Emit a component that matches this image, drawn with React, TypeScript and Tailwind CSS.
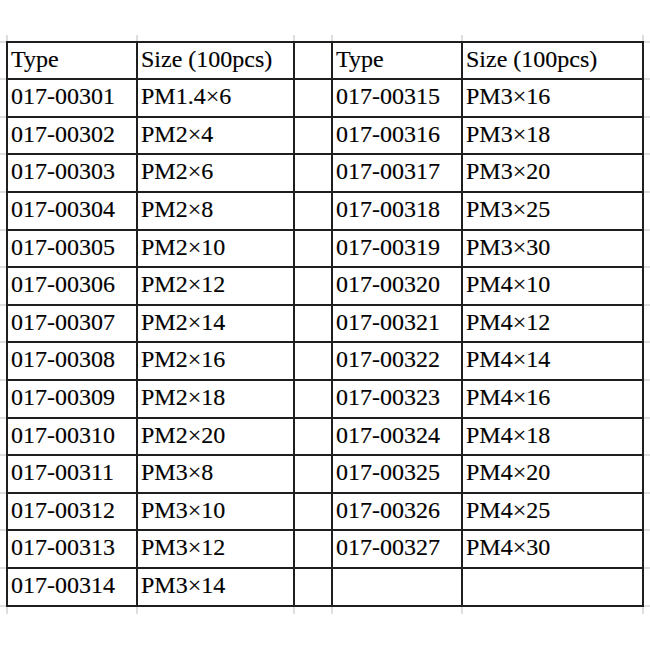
import React from 'react';

type Row = [string, string, string, string];

const rows: Row[] = [
  ['017-00301', 'PM1.4×6', '017-00315', 'PM3×16'],
  ['017-00302', 'PM2×4', '017-00316', 'PM3×18'],
  ['017-00303', 'PM2×6', '017-00317', 'PM3×20'],
  ['017-00304', 'PM2×8', '017-00318', 'PM3×25'],
  ['017-00305', 'PM2×10', '017-00319', 'PM3×30'],
  ['017-00306', 'PM2×12', '017-00320', 'PM4×10'],
  ['017-00307', 'PM2×14', '017-00321', 'PM4×12'],
  ['017-00308', 'PM2×16', '017-00322', 'PM4×14'],
  ['017-00309', 'PM2×18', '017-00323', 'PM4×16'],
  ['017-00310', 'PM2×20', '017-00324', 'PM4×18'],
  ['017-00311', 'PM3×8', '017-00325', 'PM4×20'],
  ['017-00312', 'PM3×10', '017-00326', 'PM4×25'],
  ['017-00313', 'PM3×12', '017-00327', 'PM4×30'],
  ['017-00314', 'PM3×14', '', ''],
];

const cols = 'grid-cols-[128px_155px_36px_128px_179px]';

function Cell({ text }: { text: string }) {
  return (
    <div className="bg-white pl-[3px] pt-[4px] font-['Liberation_Serif','Times_New_Roman',serif] text-[24px] leading-[24px] text-black [-webkit-text-stroke:0.15px_#000] whitespace-nowrap overflow-hidden">
      {text}
    </div>
  );
}

/** faint spreadsheet gridlines peeking out around the table */
function Stub({ h }: { h: string }) {
  return (
    <div className={`grid ${cols} gap-x-[2px] px-[2px] bg-[#dedede] ${h}`}>
      {Array.from({ length: 5 }).map((_, i) => (
        <div key={i} className="bg-white" />
      ))}
    </div>
  );
}

function SideStub() {
  return (
    <div className="grid grid-rows-[repeat(15,35.6px)] gap-y-[2px] py-[2px] bg-[#dedede] w-[6px]">
      {Array.from({ length: 15 }).map((_, i) => (
        <div key={i} className="bg-white" />
      ))}
    </div>
  );
}

export default function App() {
  const all: Row[] = [['Type', 'Size (100pcs)', 'Type', 'Size (100pcs)'], ...rows];
  return (
    <div className="w-[650px] h-[650px] bg-white overflow-hidden font-['Liberation_Serif',serif]">
      <div className="pt-[35px] flex">
        <div className="w-[6px] pt-[5.7px]">
          <SideStub />
        </div>
        <div className="flex flex-col">
          <Stub h="h-[5.7px]" />
          <div
            className={`grid ${cols} grid-rows-[repeat(15,35.6px)] gap-[2px] p-[2px] bg-[#1e1e1e]`}
          >
            {all.map((r, i) => (
              <React.Fragment key={i}>
                <Cell text={r[0]} />
                <Cell text={r[1]} />
                <div className="bg-white" />
                <Cell text={r[2]} />
                <Cell text={r[3]} />
              </React.Fragment>
            ))}
          </div>
          <Stub h="h-[7px]" />
        </div>
        <div className="w-[6px] pt-[5.7px]">
          <SideStub />
        </div>
      </div>
    </div>
  );
}
